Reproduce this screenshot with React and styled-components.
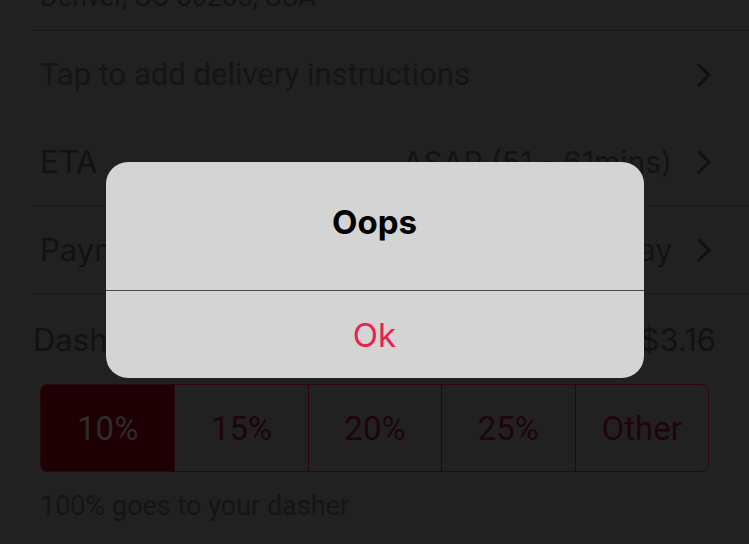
import React from "react";
import styled, { createGlobalStyle } from "styled-components";

const GlobalStyle = createGlobalStyle`
  html, body {
    margin: 0;
    padding: 0;
    background: #212121;
  }
  * { box-sizing: border-box; }
`;

const Screen = styled.div`
  position: relative;
  width: 749px;
  height: 544px;
  overflow: hidden;
  background: #212121;
  color: #131313;
  font-family: Roboto, "Liberation Sans", sans-serif;
`;

const List = styled.div`
  display: flex;
  flex-direction: column;
  margin-top: -18px;
`;

const Address = styled.div`
  height: 48px;
  padding-left: 40px;
  font-size: 27px;
  line-height: 30px;
  display: flex;
  align-items: flex-start;
`;

const Divider = styled.div`
  height: 1px;
  margin-left: 32px;
  background: #191919;
`;

const Row = styled.div`
  height: ${(p) => p.h || 87}px;
  display: flex;
  align-items: center;
  justify-content: space-between;
  padding: 0 ${(p) => p.pr || 37}px 0 ${(p) => p.pl || 40}px;
`;

const Hint = styled.span`
  font-family: Roboto, sans-serif;
  font-size: 31px;
  color: #151515;
`;

const Label = styled.span`
  font-family: Inter, "Noto Sans", sans-serif;
  font-size: 31px;
  color: #121212;
`;

const Value = styled.div`
  display: flex;
  align-items: center;
  gap: 24px;
  font-family: Inter, "Noto Sans", sans-serif;
  font-size: 30px;
  color: #131313;
`;

const Segments = styled.div`
  display: grid;
  grid-template-columns: repeat(5, 1fr);
  height: 88px;
  margin: 0 40px;
  border: 1.5px solid #2c0510;
  border-radius: 7px;
  overflow: hidden;
`;

const Segment = styled.div`
  display: flex;
  align-items: center;
  justify-content: center;
  font-size: 33px;
  background: ${(p) => (p.active ? "#1f0005" : "transparent")};
  color: ${(p) => (p.active ? "#2c2c2c" : "#1f050a")};
  & + & {
    border-left: 1.5px solid #2a0510;
  }
`;

const Caption = styled.div`
  padding: 18px 40px 0;
  font-size: 27px;
  color: #151515;
`;

const Backdrop = styled.div`
  position: absolute;
  inset: 0;
  display: flex;
  align-items: center;
  justify-content: center;
  padding-bottom: 4px;
`;

const Alert = styled.div`
  width: 538px;
  background: #d4d4d4;
  border-radius: 22px;
  overflow: hidden;
  font-family: Inter, "Noto Sans", sans-serif;
  text-align: center;
`;

const AlertTitle = styled.div`
  height: 128px;
  padding-top: 40px;
  font-size: 33px;
  line-height: 40px;
  font-weight: 700;
  color: #000;
`;

const AlertLine = styled.div`
  height: 1px;
  background: #4a4a4a;
`;

const AlertButton = styled.div`
  height: 87px;
  display: flex;
  align-items: center;
  justify-content: center;
  font-size: 33px;
  color: #ea2150;
`;

const Chevron = () => (
  <svg width="16" height="24" viewBox="0 0 16 24" fill="none">
    <path d="M3 2 L13 12 L3 22" stroke="#111" strokeWidth="3" strokeLinecap="round" strokeLinejoin="round" />
  </svg>
);

const tips = ["10%", "15%", "20%", "25%", "Other"];

export default function App() {
  return (
    <>
      <GlobalStyle />
      <Screen>
        <List>
          <Address>Denver, CO 80205, USA</Address>
          <Divider />
          <Row>
            <Hint>Tap to add delivery instructions</Hint>
            <Chevron />
          </Row>
          <Row>
            <Label>ETA</Label>
            <Value>
              ASAP (51 - 61mins)
              <Chevron />
            </Value>
          </Row>
          <Divider />
          <Row>
            <Label>Payment</Label>
            <Value>
              Apple Pay
              <Chevron />
            </Value>
          </Row>
          <Divider />
          <Row h={90} pl={33} pr={33}>
            <Label>Dasher Tip</Label>
            <Label>$3.16</Label>
          </Row>
          <Segments>
            {tips.map((t, i) => (
              <Segment key={t} active={i === 0}>
                {t}
              </Segment>
            ))}
          </Segments>
          <Caption>100% goes to your dasher</Caption>
        </List>
        <Backdrop>
          <Alert>
            <AlertTitle>Oops</AlertTitle>
            <AlertLine />
            <AlertButton>Ok</AlertButton>
          </Alert>
        </Backdrop>
      </Screen>
    </>
  );
}
